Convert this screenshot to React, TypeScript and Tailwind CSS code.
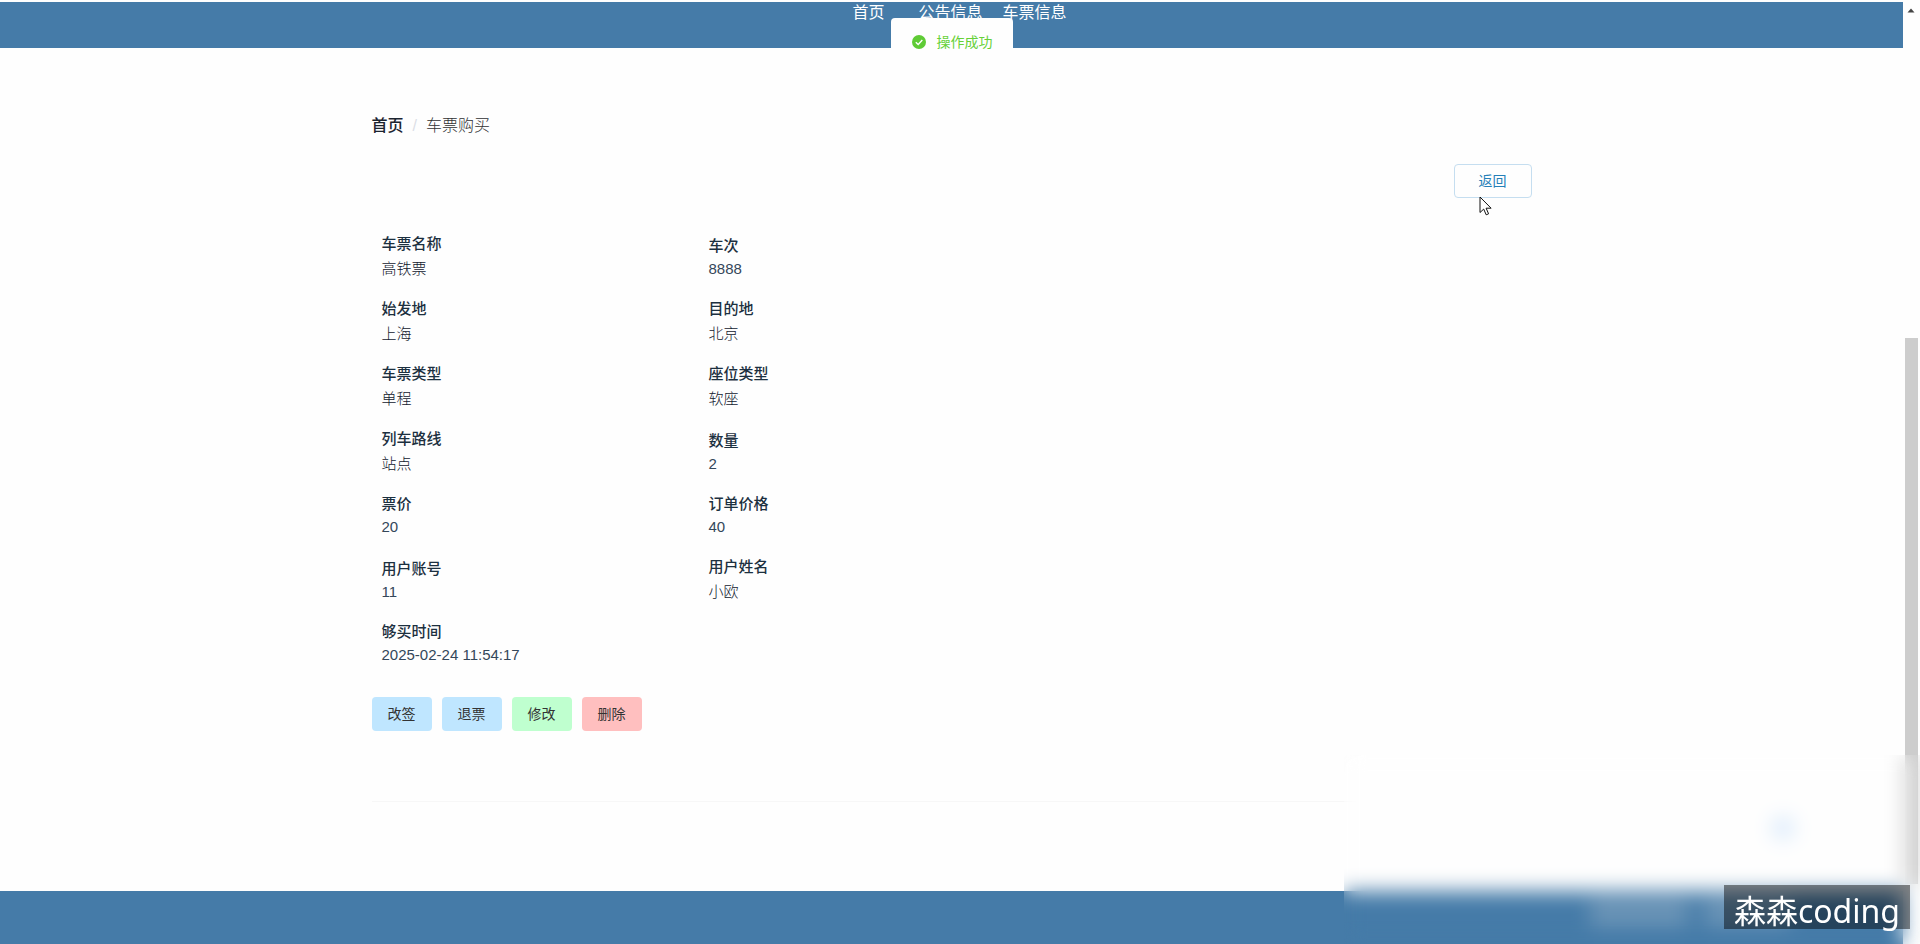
import React from "react";

type Field = { label: string; value: string; numeric?: boolean };

const rows: Field[][] = [
  [{ label: "车票名称", value: "高铁票" }, { label: "车次", value: "8888", numeric: true }],
  [{ label: "始发地", value: "上海" }, { label: "目的地", value: "北京" }],
  [{ label: "车票类型", value: "单程" }, { label: "座位类型", value: "软座" }],
  [{ label: "列车路线", value: "站点" }, { label: "数量", value: "2", numeric: true }],
  [{ label: "票价", value: "20", numeric: true }, { label: "订单价格", value: "40", numeric: true }],
  [{ label: "用户账号", value: "11", numeric: true }, { label: "用户姓名", value: "小欧" }],
  [{ label: "够买时间", value: "2025-02-24 11:54:17", numeric: true }],
];

const actions = [
  { label: "改签", color: "bg-[#bfe6ff]" },
  { label: "退票", color: "bg-[#bfe6ff]" },
  { label: "修改", color: "bg-[#bfffcf]" },
  { label: "删除", color: "bg-[#ffbfbf]" },
];

function Header() {
  return (
    <header className="mt-0.5 h-[46px] bg-[#457ba8]">
      <nav className="flex justify-center pl-4 text-base leading-[22px] text-white">
        <a href="#home" className="mr-[34px]">首页</a>
        <a href="#notices" className="mr-5">公告信息</a>
        <a href="#tickets">车票信息</a>
      </nav>
    </header>
  );
}

function Toast() {
  return (
    <div className="pointer-events-none absolute inset-x-0 top-[18px] flex justify-center">
      <div role="status" className="flex h-12 items-center gap-2.5 rounded bg-[#fefefe] px-5 text-sm text-[#67d138]">
        <svg viewBox="0 0 16 16" className="size-4" aria-hidden="true">
          <circle cx="8" cy="8" r="7" fill="#5fcb35" />
          <path d="M4.8 8.2 7.2 10.5 11.3 6.1" fill="none" stroke="#fff" strokeWidth="1.4" />
        </svg>
        <span>操作成功</span>
      </div>
    </div>
  );
}

function FieldItem({ field }: { field: Field }) {
  return (
    <div className="w-[327px]">
      <dt className="leading-6 font-medium text-[#1c3040]">{field.label}</dt>
      <dd className={field.numeric ? "pb-[17px] leading-[22px] text-[#34475a]" : "pb-[15px] leading-[26px] text-[#12202e]"}>{field.value}</dd>
    </div>
  );
}

function Scrollbar() {
  return (
    <div className="flex w-[17px] flex-col bg-[#fefefe] pt-2" aria-hidden="true">
      <svg viewBox="0 0 8 5" className="ml-1 h-[5px] w-2">
        <path d="M4 0.5 7.5 4.5H0.5Z" fill="#444" />
      </svg>
      <div className="mt-[325px] ml-0.5 h-[546px] w-[13px] bg-[#cdcdcd]" />
    </div>
  );
}

export default function App() {
  return (
    <div className="relative flex min-h-screen overflow-hidden bg-[#fefefe] font-['Liberation_Sans','Noto_Sans_CJK_SC',sans-serif]">
      <div className="relative flex flex-1 flex-col">
        <Header />
        <Toast />
        <main className="mx-auto w-full max-w-[1160px] pt-[66px]">
          <div className="flex h-6 items-center text-base">
            <a href="#home" className="font-medium text-[#1c2430]">首页</a>
            <span className="mx-[9px] text-[#dcdfe6]">/</span>
            <span className="font-light text-[#303133]">车票购买</span>
          </div>
          <div className="mt-[26px] flex justify-end">
            <button type="button" className="h-[34px] w-[78px] rounded border border-[#c5def0] text-sm text-[#2580b8]">返回</button>
          </div>
          <dl className="mt-[34px] pl-2.5 text-[15px] font-light">
            {rows.map((row) => (
              <div key={row[0].label} className="flex items-end">
                {row.map((field) => <FieldItem key={field.label} field={field} />)}
              </div>
            ))}
          </dl>
          <div className="mt-3.5 flex gap-2.5">
            {actions.map((action) => (
              <button key={action.label} type="button" className={`h-[34px] w-[60px] rounded text-sm text-[#333] ${action.color}`}>
                {action.label}
              </button>
            ))}
          </div>
          <hr className="mt-[70px] border-[#f7f7f7]" />
        </main>
        <footer className="mt-[89px] min-h-[53px] flex-1 bg-[#457ba8]" />
      </div>
      <Scrollbar />

      <div className="absolute right-[126px] bottom-[105px] size-[22px] rounded-full bg-[#d8e9fb]" />
      <div className="absolute right-[232px] bottom-[18px] h-[27px] w-[98px] bg-[#6c95b7]" />
      <div className="absolute right-[130px] bottom-[18px] h-[27px] w-[86px] bg-[#6c95b7]" />
      <div className="absolute right-0 bottom-0 h-[189px] w-[576px] backdrop-blur-[10px]" />
      <div className="absolute right-2.5 bottom-[15px] flex h-11 items-center bg-black/45 px-2.5 pt-2 font-['Noto_Sans','Noto_Sans_CJK_SC',sans-serif] text-[32px] leading-none whitespace-nowrap text-white">
        森森coding
      </div>

      <svg viewBox="0 0 13 20" className="absolute top-[196px] left-[calc(50%+519px)] h-5 w-[13px]" aria-hidden="true">
        <path d="M1 1v15.5l3.7-3.4 2.5 5.7 2.4-1-2.5-5.6h5z" fill="#fff" stroke="#111" strokeWidth="1" />
      </svg>
    </div>
  );
}
